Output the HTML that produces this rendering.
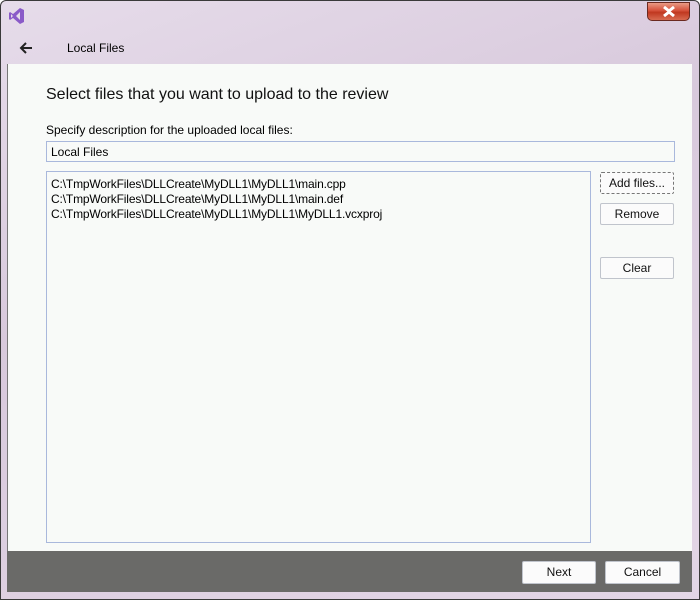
<!DOCTYPE html>
<html><head><meta charset="utf-8"><style>
*{margin:0;padding:0;box-sizing:border-box}
body{width:700px;height:600px;overflow:hidden;font-family:"Liberation Sans",sans-serif;background:#fff}
.win{position:absolute;left:0;top:0;width:700px;height:600px;border:1px solid #3a3a3a;border-radius:6px 6px 0 0;background:linear-gradient(160deg,#e6dcea 0%,#d8c9dc 40%,#e3d6e6 100%)}
.close{position:absolute;left:646px;top:1px;width:43px;height:19px;border:1px solid #6b2a20;border-radius:0 0 5px 5px;background:linear-gradient(#e99a85 0%,#d5503a 45%,#c03820 55%,#d86a50 100%)}
.content{position:absolute;left:7px;top:64px;width:685px;height:487px;background:#f8faf8;border-left:1px solid #777}
.footer{position:absolute;left:7px;top:551px;width:685px;height:41px;background:#6a6a68}
.t{position:absolute;white-space:nowrap;color:#000}
.box{position:absolute;border:1px solid #a9b8dc;background:#f8faf8}
.btn{position:absolute;border:1px solid #c0c4cc;border-radius:2px;background:#fbfbfb;font-size:12px;text-align:center;color:#111}
</style></head><body>
<div class="win">
<svg style="position:absolute;left:7px;top:6px" width="18" height="18" viewBox="0 0 18 18"><path d="M12 1l4 2v12l-4 2-7-6-3 2-1-1V6l1-1 3 2zM12 5l-4 4 4 4z M3 7v4l2-2z" fill="#8a5ac8" fill-rule="evenodd"/></svg>
<div class="close"><svg style="position:absolute;left:14px;top:3px" width="14" height="11" viewBox="0 0 14 11"><path d="M2 1l5 4 5-4M2 10l5-4 5 4" stroke="#fff" stroke-width="3" fill="none"/></svg></div>
<svg style="position:absolute;left:17px;top:40px" width="16" height="14" viewBox="0 0 16 14"><path d="M14 7H3M8 2L3 7l5 5" stroke="#222" stroke-width="2" fill="none"/></svg>
<div class="t" style="left:66px;top:40px;font-size:12px">Local Files</div>
</div>
<div class="content">
<div class="t" style="left:38px;top:22px;font-size:16px;color:#111">Select files that you want to upload to the review</div>
<div class="t" style="left:38px;top:59px;font-size:12px">Specify description for the uploaded local files:</div>
<div class="box" style="left:38px;top:77px;width:629px;height:21px"><span class="t" style="left:4px;top:3px;font-size:12px">Local Files</span></div>
<div class="box" style="left:38px;top:107px;width:545px;height:372px">
<div class="t" style="left:4px;top:5px;font-size:12px;line-height:15px;letter-spacing:-0.15px">C:\TmpWorkFiles\DLLCreate\MyDLL1\MyDLL1\main.cpp<br>C:\TmpWorkFiles\DLLCreate\MyDLL1\MyDLL1\main.def<br>C:\TmpWorkFiles\DLLCreate\MyDLL1\MyDLL1\MyDLL1.vcxproj</div>
</div>
<div class="btn" style="left:592px;top:108px;width:74px;height:22px;line-height:20px;border:1px dashed #777">Add files...</div>
<div class="btn" style="left:592px;top:139px;width:74px;height:22px;line-height:20px">Remove</div>
<div class="btn" style="left:592px;top:193px;width:74px;height:22px;line-height:20px">Clear</div>
</div>
<div class="footer">
<div class="btn" style="left:515px;top:10px;width:74px;height:23px;line-height:21px">Next</div>
<div class="btn" style="left:598px;top:10px;width:75px;height:23px;line-height:21px">Cancel</div>
</div>
</body></html>
